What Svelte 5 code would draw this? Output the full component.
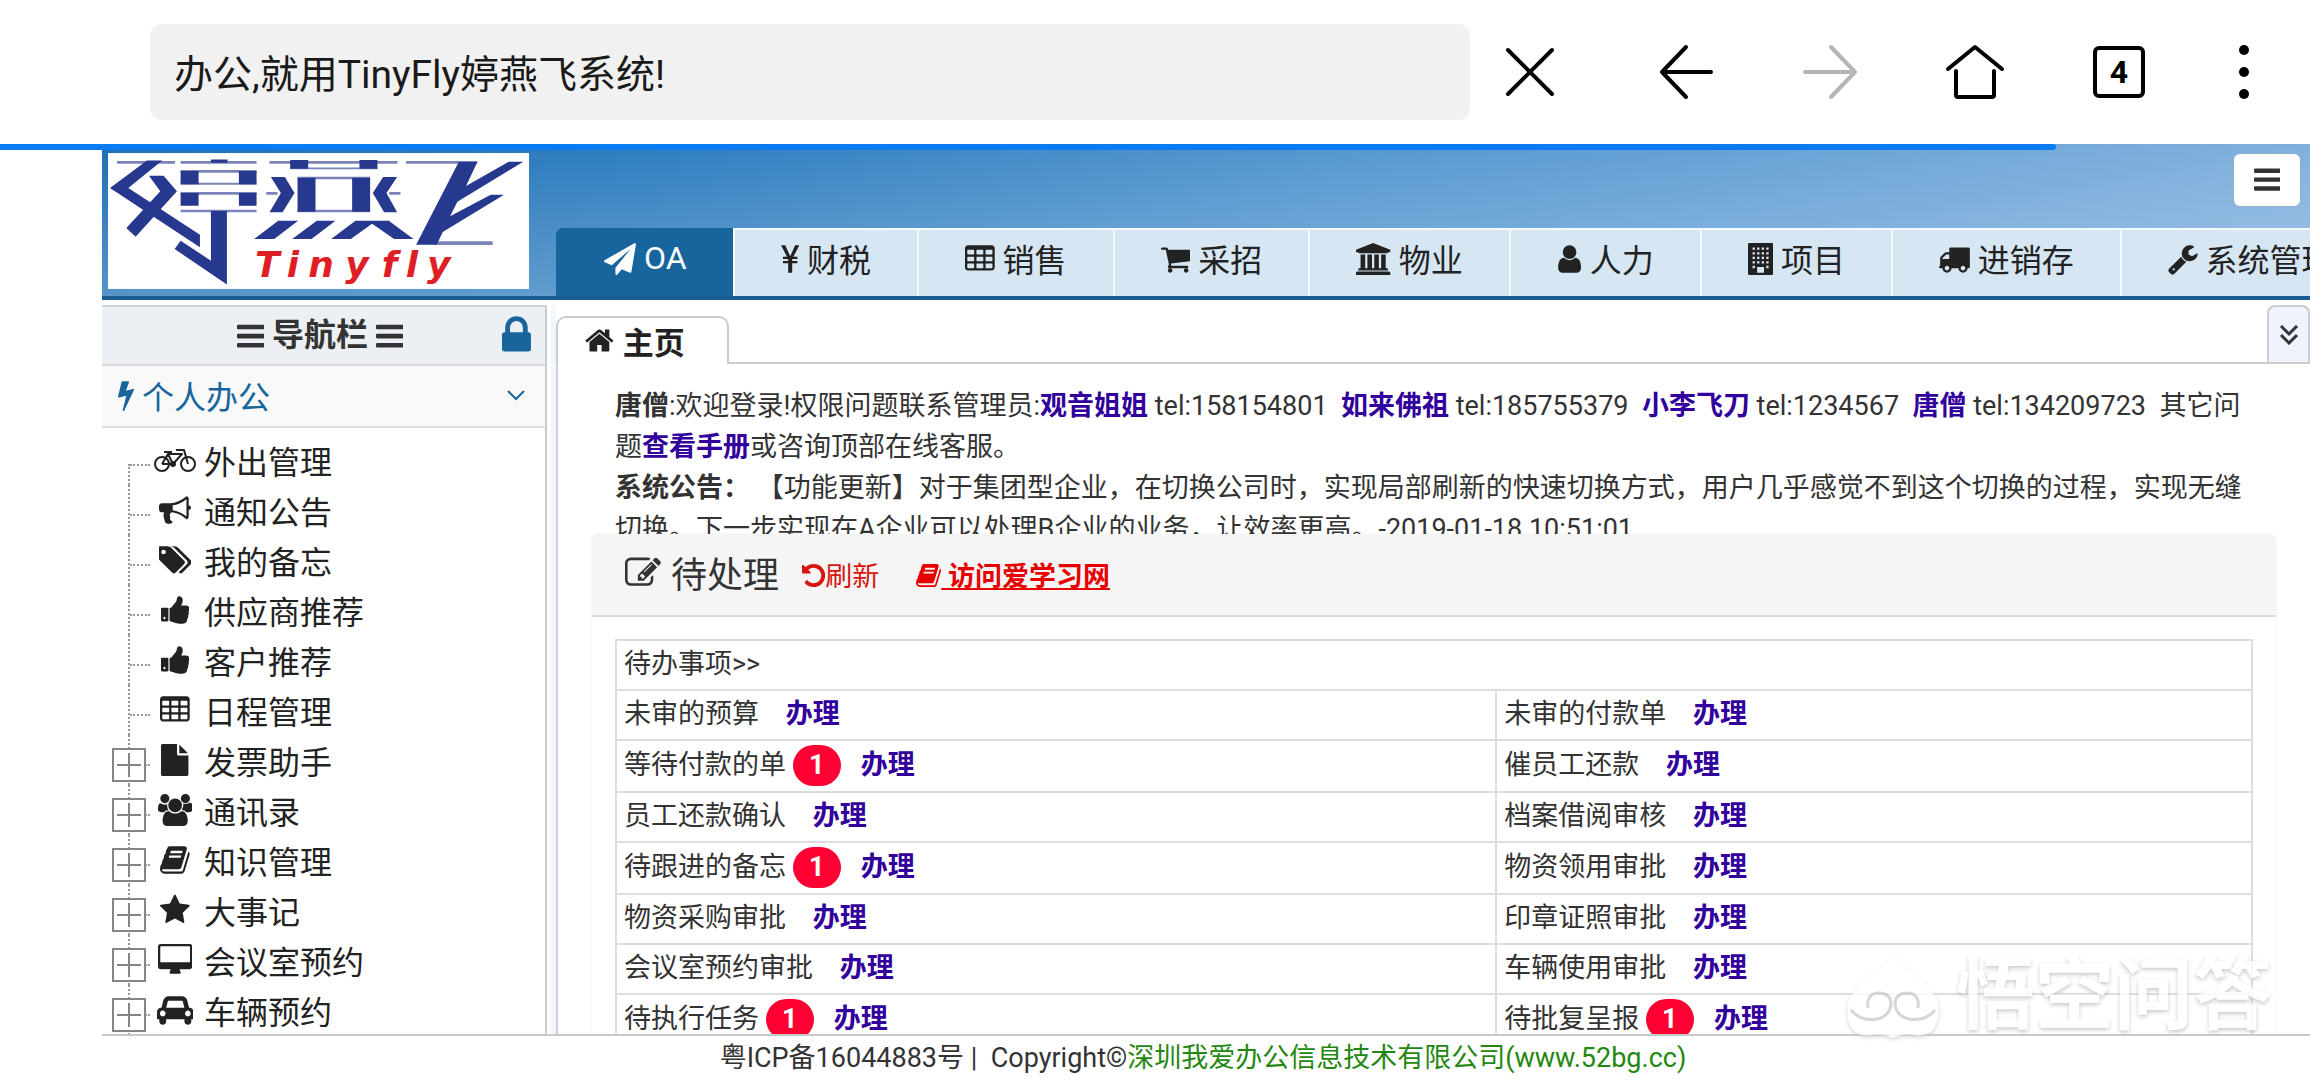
<script>
  const icons = {
    plane: { box: '0 0 1792 1792', d: 'M1764 11q33 24 27 64l-256 1536q-5 29-32 45-14 8-31 8-11 0-24-5l-453-185-242 295q-18 23-49 23-13 0-22-4-19-7-30.5-23.5t-11.5-36.5v-349l864-1059-1069 925-395-162q-37-14-40-55-2-40 32-59l1664-960q15-9 32-9 20 0 36 11z' },
    yen: { box: '0 0 1027 1792', d: 'M0 128h240l275 620 275-620h237l-335 640h225v130h-290v110h290v130h-290v526h-225v-526h-292v-130h292v-110h-292v-130h226z' },
    table: { box: '64 0 1664 1792', d: 'M576 1376v-192q0-14-9-23t-23-9h-320q-14 0-23 9t-9 23v192q0 14 9 23t23 9h320q14 0 23-9t9-23zm0-384v-192q0-14-9-23t-23-9h-320q-14 0-23 9t-9 23v192q0 14 9 23t23 9h320q14 0 23-9t9-23zm512 384v-192q0-14-9-23t-23-9h-320q-14 0-23 9t-9 23v192q0 14 9 23t23 9h320q14 0 23-9t9-23zm-512-768v-192q0-14-9-23t-23-9h-320q-14 0-23 9t-9 23v192q0 14 9 23t23 9h320q14 0 23-9t9-23zm512 384v-192q0-14-9-23t-23-9h-320q-14 0-23 9t-9 23v192q0 14 9 23t23 9h320q14 0 23-9t9-23zm512 384v-192q0-14-9-23t-23-9h-320q-14 0-23 9t-9 23v192q0 14 9 23t23 9h320q14 0 23-9t9-23zm-512-768v-192q0-14-9-23t-23-9h-320q-14 0-23 9t-9 23v192q0 14 9 23t23 9h320q14 0 23-9t9-23zm512 384v-192q0-14-9-23t-23-9h-320q-14 0-23 9t-9 23v192q0 14 9 23t23 9h320q14 0 23-9t9-23zm0-384v-192q0-14-9-23t-23-9h-320q-14 0-23 9t-9 23v192q0 14 9 23t23 9h320q14 0 23-9t9-23zm128-320v1088q0 66-47 113t-113 47h-1344q-66 0-113-47t-47-113v-1088q0-66 47-113t113-47h1344q66 0 113 47t47 113z' },
    cart: { box: '64 0 1664 1792', d: 'M704 1536q0 52-38 90t-90 38-90-38-38-90 38-90 90-38 90 38 38 90zm896 0q0 52-38 90t-90 38-90-38-38-90 38-90 90-38 90 38 38 90zm128-1088v512q0 24-16.5 42.5t-40.5 21.5l-1044 122q13 60 13 70 0 16-24 64h920q26 0 45 19t19 45-19 45-45 19h-1024q-26 0-45-19t-19-45q0-11 8-31.5t16-36 21.5-40 15.5-29.5l-177-823h-204q-26 0-45-19t-19-45 19-45 45-19h256q16 0 28.5 6.5t19.5 15.5 13 24.5 8 26 5.5 29.5 4.5 26h1201q26 0 45 19t19 45z' },
    bank: { box: '0 0 1920 1792', d: 'M960 0l960 384v128h-128q0 26-20.5 45t-48.5 19h-1526q-28 0-48.5-19t-20.5-45h-128v-128zm-704 640h256v768h128v-768h256v768h128v-768h256v768h128v-768h256v768h59q28 0 48.5 19t20.5 45v64h-1664v-64q0-26 20.5-45t48.5-19h59v-768zm1595 960q28 0 48.5 19t20.5 45v128h-1920v-128q0-26 20.5-45t48.5-19h1782z' },
    user: { box: '192 0 1408 1792', d: 'M1536 1399q0 109-62.5 187t-150.5 78h-854q-88 0-150.5-78t-62.5-187q0-85 8.5-160.5t31.5-152 58.5-131 94-89 134.5-34.5q131 128 313 128t313-128q76 0 134.5 34.5t94 89 58.5 131 31.5 152 8.5 160.5zm-256-887q0 159-112.5 271.5t-271.5 112.5-271.5-112.5-112.5-271.5 112.5-271.5 271.5-112.5 271.5 112.5 112.5 271.5z' },
    building: { box: '0 0 1408 1792', d: 'M64 0h1280q64 0 64 64v1664q0 64-64 64h-1280q-64 0-64-64v-1664q0-64 64-64zM256 256v128h128v-128zM512 256v128h128v-128zM768 256v128h128v-128zM1024 256v128h128v-128zM256 512v128h128v-128zM512 512v128h128v-128zM768 512v128h128v-128zM1024 512v128h128v-128zM256 768v128h128v-128zM512 768v128h128v-128zM768 768v128h128v-128zM1024 768v128h128v-128zM256 1024v128h128v-128zM512 1024v128h128v-128zM768 1024v128h128v-128zM1024 1024v128h128v-128zM256 1280v128h128v-128zM1024 1280v128h128v-128zM512 1344v320h384v-320z' },
    truck: { box: '64 0 1728 1792', d: 'M640 1408q0-52-38-90t-90-38-90 38-38 90 38 90 90 38 90-38 38-90zm-384-512h384v-256h-158q-13 0-22 9l-195 195q-9 9-9 22v30zm1280 512q0-52-38-90t-90-38-90 38-38 90 38 90 90 38 90-38 38-90zm256-1088v1024q0 15-4 26.5t-13.5 18.5-16.5 11.5-23.5 6-22.5 2-25.5 0-22.5-.5q0 106-75 181t-181 75-181-75-75-181h-384q0 106-75 181t-181 75-181-75-75-181h-64q-3 0-22.5.5t-25.5 0-22.5-2-23.5-6-16.5-11.5-13.5-18.5-4-26.5q0-26 19-45t45-19v-320q0-8-.5-35t0-38 2.5-34.5 6.5-37 14-30.5 22.5-30l198-198q19-19 50.5-32t58.5-13h160v-192q0-26 19-45t45-19h1024q26 0 45 19t19 45z' },
    wrench: { box: '64 0 1664 1792', d: 'M448 1472q0-26-19-45t-45-19-45 19-19 45 19 45 45 19 45-19 19-45zm644-420l-682 682q-37 37-90 37-52 0-91-37l-106-108q-38-36-38-90 0-53 38-91l681-681q39 98 114.5 173.5t173.5 114.5zm634-435q0 39-23 106-47 134-164.5 217.5t-258.5 83.5q-185 0-316.5-131.5t-131.5-316.5 131.5-316.5 316.5-131.5q58 0 121.5 16.5t107.5 46.5q16 11 16 28t-16 28l-293 169v224l193 107q5-3 79-48.5t135.5-81 70.5-35.5q15 0 23.5 10t8.5 25z' },
    bars: { box: '128 0 1536 1792', d: 'M192 320h1408q64 0 64 64v128q0 64-64 64h-1408q-64 0-64-64v-128q0-64 64-64zM192 832h1408q64 0 64 64v128q0 64-64 64h-1408q-64 0-64-64v-128q0-64 64-64zM192 1344h1408q64 0 64 64v128q0 64-64 64h-1408q-64 0-64-64v-128q0-64 64-64z' },
    lock: { box: '320 0 1152 1792', d: 'M640 768h512v-192q0-106-75-181t-181-75-181 75-75 181v192zm832 96v576q0 40-28 68t-68 28h-960q-40 0-68-28t-28-68v-576q0-40 28-68t68-28h32v-192q0-184 132-316t316-132 316 132 132 316v192h32q40 0 68 28t28 68z' },
    bolt: { box: '448 0 896 1792', d: 'M1333 566q18 20 7 44l-540 1157q-13 25-42 25-4 0-14-2-17-5-25.5-19t-4.5-30l197-808-406 101q-4 1-12 1-18 0-31-11-18-15-13-39l201-825q4-14 16-23t28-9h328q19 0 32 12.5t13 29.5q0 8-5 18l-171 463 396-98q8-2 12-2 19 0 34 15z' },
    bullhorn: { box: '0 0 1792 1792', d: 'M1664 640q53 0 90.5 37.5t37.5 90.5-37.5 90.5-90.5 37.5v384q0 52-38 90t-90 38q-417-347-812-380-58 19-91 66t-31 100.5 40 92.5q-20 33-23 65.5t6 58 33.5 55 48 50 61.5 50.5q-29 58-111.5 83t-168.5 11.5-132-55.5q-7-23-29.5-87.5t-32-94.5-23-89-15-101 3.5-98.5 22-110.5h-122q-66 0-113-47t-47-113v-192q0-66 47-113t113-47h480q435 0 896-384 52 0 90 38t38 90v384zm-128 604v-954q-394 302-768 343v270q377 42 768 341z' },
    tags: { box: '0 0 1835 1792', d: 'M384 448q0-53-37.5-90.5t-90.5-37.5-90.5 37.5-37.5 90.5 37.5 90.5 90.5 37.5 90.5-37.5 37.5-90.5zm1067 576q0 53-37 90l-491 492q-39 37-91 37-53 0-90-37l-715-716q-38-37-64.5-101t-26.5-117v-416q0-52 38-90t90-38h416q53 0 117 26.5t102 64.5l715 714q37 39 37 91zm384 0q0 53-37 90l-491 492q-39 37-91 37-36 0-59-14t-53-45l470-470q37-37 37-90 0-52-37-91l-715-714q-38-38-102-64.5t-117-26.5h224q53 0 117 26.5t102 64.5l715 714q37 39 37 91z' },
    thumb: { box: '64 0 1600 1792', d: 'M320 1344q0-26-19-45t-45-19q-27 0-45.5 19t-18.5 45q0 27 18.5 45.5t45.5 18.5q26 0 45-18.5t19-45.5zm160-512v640q0 26-19 45t-45 19h-288q-26 0-45-19t-19-45v-640q0-26 19-45t45-19h288q26 0 45 19t19 45zm1184 0q0 86-55 149 15 44 15 76 3 76-43 137 17 56 0 117-15 57-54 94 9 112-49 181-64 76-197 78h-129q-66 0-144-15.5t-121.5-29-120.5-39.5q-123-43-158-44-26-1-45-19.5t-19-44.5v-641q0-25 18-43.5t43-20.5q24-2 76-59t101-121q68-87 101-120 18-18 31-48t17.5-48.5 13.5-60.5q7-39 12.5-61t19.5-52 34-50q19-19 45-19 46 0 82.5 10.5t60 26 40 40.5 24 45 12 50 5 45 .5 39q0 38-9.5 76t-19 60-27.5 56q-3 6-10 18t-11 22-8 24h277q78 0 135 57t57 135z' },
    file: { box: '128 0 1536 1792', d: 'M1152 512v-472q22 14 36 28l408 408q14 14 28 36h-472zm-128 32q0 40 28 68t68 28h544v1056q0 40-28 68t-68 28h-1344q-40 0-68-28t-28-68v-1600q0-40 28-68t68-28h800v544z' },
    users: { box: '0 0 1920 1792', d: 'M593 896q-162 5-265 128h-134q-82 0-138-40.5t-56-118.5q0-353 124-353 6 0 43.5 21t97.5 42.5 119 21.5q67 0 133-23-5 37-5 66 0 159 93 293zm1071 637q0 120-73 189.5t-194 69.5h-874q-121 0-194-69.5t-73-189.5q0-53 3.5-103.5t14-109 26.5-108.5 43-97.5 62-81 85.5-53.5 111.5-20q10 0 43 21.5t73 48 107 48 135 21.5 135-21.5 107-48 73-48 43-21.5q61 0 111.5 20t85.5 53.5 62 81 43 97.5 26.5 108.5 14 109 3.5 103.5zm-1024-1277q0 106-75 181t-181 75-181-75-75-181 75-181 181-75 181 75 75 181zm704 384q0 159-112.5 271.5t-271.5 112.5-271.5-112.5-112.5-271.5 112.5-271.5 271.5-112.5 271.5 112.5 112.5 271.5zm576 225q0 78-56 118.5t-138 40.5h-134q-103-123-265-128 93-134 93-293 0-29-5-66 66 23 133 23 59 0 119-21.5t97.5-42.5 43.5-21q124 0 124 353zm-128-609q0 106-75 181t-181 75-181-75-75-181 75-181 181-75 181 75 75 181z' },
    book: { box: '64 0 1664 1792', d: 'M1703 478q40 57 18 129l-275 906q-19 64-76.5 107.5t-122.5 43.5h-923q-77 0-148.5-53.5t-99.5-131.5q-24-67-2-127 0-4 3-27t4-37q1-8-3-21.5t-3-19.5q2-11 8-21t16.5-23.5 16.5-23.5q23-38 45-91.5t30-91.5q3-10 .5-30t-.5-28q3-11 17-28t17-23q21-36 42-92t25-90q1-9-2.5-32t.5-28q4-13 22-30.5t22-22.5q19-26 42.5-84.5t27.5-96.5q1-8-3-25.5t-2-26.5q2-8 9-18t18-23 17-21q8-12 16.5-30.5t15-35 16-36 19.5-32 26.5-23.5 36-11.5 47.5 5.5l-1 3q38-9 51-9h761q74 0 114 56t18 130l-274 906q-36 119-71.5 153.5t-128.5 34.5h-869q-27 0-38 15-11 16-1 43 24 70 144 70h923q29 0 56-15.5t35-41.5l300-987q7-22 5-57 38 15 59 43zm-1064 2q-4 13 2 22.5t20 9.5h608q13 0 25.5-9.5t16.5-22.5l21-64q4-13-2-22.5t-20-9.5h-608q-13 0-25.5 9.5t-16.5 22.5zm-83 256q-4 13 2 22.5t20 9.5h608q13 0 25.5-9.5t16.5-22.5l21-64q4-13-2-22.5t-20-9.5h-608q-13 0-25.5 9.5t-16.5 22.5z' },
    star: { box: '64 0 1664 1792', d: 'M1728 647q0 22-26 48l-363 354 86 500q1 7 1 20 0 21-10.5 35.5t-30.5 14.5q-19 0-40-12l-449-236-449 236q-22 12-40 12-21 0-31.5-14.5t-10.5-35.5q0-6 2-20l86-500-364-354q-25-27-25-48 0-37 56-46l502-73 225-455q19-41 49-41t49 41l225 455 502 73q56 9 56 46z' },
    desktop: { box: '0 0 1920 1792', d: 'M160 0h1600q160 0 160 160v1088q0 160-160 160h-544q0 60 32 130t32 70q0 56-64 56h-512q-64 0-64-56 0-10 32-75t32-125h-544q-160 0-160-160v-1088q0-160 160-160zM160 128q-32 0-32 32v832q0 32 32 32h1600q32 0 32-32v-832q0-32-32-32z' },
    car: { box: '0 0 2048 1792', d: 'M480 1088q0-66-47-113t-113-47-113 47-47 113 47 113 113 47 113-47 47-113zm36-320h1016l-89-357q-2-8-14-17.5t-21-9.5h-768q-9 0-21 9.5t-14 17.5zm1372 320q0-66-47-113t-113-47-113 47-47 113 47 113 113 47 113-47 47-113zm160-96v384q0 14-9 23t-23 9h-96v128q0 80-56 136t-136 56-136-56-56-136v-128h-1024v128q0 80-56 136t-136 56-136-56-56-136v-128h-96q-14 0-23-9t-9-23v-384q0-93 65.5-158.5t158.5-65.5h28l105-419q23-94 104-157.5t179-63.5h768q98 0 179 63.5t104 157.5l105 419h28q93 0 158.5 65.5t65.5 158.5z' },
    home: { box: '64 0 1664 1792', d: 'M1472 992v480q0 26-19 45t-45 19h-384v-384h-256v384h-384q-26 0-45-19t-19-45v-480q0-1 .5-3t.5-3l575-474 575 474q1 2 1 6zm223-69l-62 74q-8 9-21 11h-3q-13 0-21-7l-692-577-692 577q-12 8-24 7-13-2-21-11l-62-74q-8-10-7-23.5t11-21.5l719-599q32-26 76-26t76 26l244 204v-195q0-14 9-23t23-9h192q14 0 23 9t9 23v408l219 182q10 8 11 21.5t-7 23.5z' },
    edit: { box: '0 0 1792 1792', d: 'M888 1184l116-116-152-152-116 116v56h96v96h56zm440-720q-16-16-33 1l-350 350q-17 17-1 33t33-1l350-350q17-17 1-33zm80 594v190q0 119-84.5 203.5t-203.5 84.5h-832q-119 0-203.5-84.5t-84.5-203.5v-832q0-119 84.5-203.5t203.5-84.5h832q63 0 117 25 15 7 18 23 3 17-9 29l-49 49q-14 14-32 8-23-6-45-6h-832q-66 0-113 47t-47 113v832q0 66 47 113t113 47h832q66 0 113-47t47-113v-126q0-13 9-22l64-64q15-15 35-7t20 29zm-96-738l288 288-672 672h-288v-288zm444 132l-92 92-288-288 92-92q28-28 68-28t68 28l152 152q28 28 28 68t-28 68z' },
    undo: { box: '128 0 1536 1792', d: 'M1664 896q0 156-61 298t-164 245-245 164-298 61q-172 0-327-72.5t-264-204.5q-7-10-6.5-22.5t8.5-20.5l137-138q10-9 25-9 16 2 23 12 73 95 179 147t225 52q104 0 198.5-40.5t163.5-109.5 109.5-163.5 40.5-198.5-40.5-198.5-109.5-163.5-163.5-109.5-198.5-40.5q-98 0-188 35.5t-160 101.5l137 138q31 30 14 69-17 40-59 40h-448q-26 0-45-19t-19-45v-448q0-42 40-59 39-17 69 14l130 129q107-101 244.5-156.5t284.5-55.5q156 0 298 61t245 164 164 245 61 298z' }
  };

  const modules = [
    { icon: 'plane', label: 'OA' },
    { icon: 'yen', label: '财税' },
    { icon: 'table', label: '销售' },
    { icon: 'cart', label: '采招' },
    { icon: 'bank', label: '物业' },
    { icon: 'user', label: '人力' },
    { icon: 'building', label: '项目' },
    { icon: 'truck', label: '进销存' },
    { icon: 'wrench', label: '系统管理' }
  ];

  const tree = [
    { icon: 'bicycle', label: '外出管理' },
    { icon: 'bullhorn', label: '通知公告' },
    { icon: 'tags', label: '我的备忘' },
    { icon: 'thumb', label: '供应商推荐' },
    { icon: 'thumb', label: '客户推荐' },
    { icon: 'table', label: '日程管理' },
    { icon: 'file', label: '发票助手', folder: true },
    { icon: 'users', label: '通讯录', folder: true },
    { icon: 'book', label: '知识管理', folder: true },
    { icon: 'star', label: '大事记', folder: true },
    { icon: 'desktop', label: '会议室预约', folder: true },
    { icon: 'car', label: '车辆预约', folder: true }
  ];

  const todos = [
    [{ label: '未审的预算' }, { label: '未审的付款单' }],
    [{ label: '等待付款的单', count: 1 }, { label: '催员工还款' }],
    [{ label: '员工还款确认' }, { label: '档案借阅审核' }],
    [{ label: '待跟进的备忘', count: 1 }, { label: '物资领用审批' }],
    [{ label: '物资采购审批' }, { label: '印章证照审批' }],
    [{ label: '会议室预约审批' }, { label: '车辆使用审批' }],
    [{ label: '待执行任务', count: 1 }, { label: '待批复呈报', count: 1 }]
  ];

  let active = $state('OA');
  let address = $state('办公,就用TinyFly婷燕飞系统!');
  let progress = $state(89);
</script>

{#snippet icon(name)}
  {#if name === 'bicycle'}
    <svg class="icon" viewBox="0 0 42 32" fill="none" stroke="currentColor" stroke-width="2" stroke-linejoin="round" aria-hidden="true">
      <circle cx="8" cy="20" r="7" /><circle cx="34" cy="20" r="7" />
      <path d="M8 20l6-10h14l-9 10H8M14 10l5 10M26 6h4l4 14M22 6h5M10 8h8" />
      <circle cx="19" cy="20" r="2" fill="currentColor" />
    </svg>
  {:else}
    <svg class="icon" viewBox={icons[name].box} fill="currentColor" fill-rule={['building', 'desktop'].includes(name) ? 'evenodd' : 'nonzero'} aria-hidden="true"><path d={icons[name].d} /></svg>
  {/if}
{/snippet}

<div class="screen">
  <div class="browser">
    <input class="address" type="text" aria-label="地址栏" bind:value={address} />
    <button class="tool stop" aria-label="停止">
      <svg viewBox="0 0 60 60"><path d="M8 8l44 44M52 8L8 52" /></svg>
    </button>
    <div class="tools">
      <button class="tool" aria-label="后退"><svg viewBox="0 0 60 60"><path d="M54 30H5M29 5L5 30l24 25" /></svg></button>
      <button class="tool" aria-label="前进" disabled><svg viewBox="0 0 60 60"><path d="M4 30h50M30 5l24 25-24 25" /></svg></button>
      <button class="tool" aria-label="主页"><svg viewBox="0 0 60 60"><path d="M3 27L30 5l27 22M11 29v24q0 2 2 2h34q2 0 2-2V29" /></svg></button>
      <button class="tool" aria-label="标签页"><span class="tab-count">4</span></button>
    </div>
    <button class="tool" aria-label="菜单">
      <svg viewBox="0 0 60 60"><g fill="#000" stroke="none"><circle cx="30" cy="8" r="5" /><circle cx="30" cy="30" r="5" /><circle cx="30" cy="52" r="5" /></g></svg>
    </button>
  </div>

  <div class="page">
    <div class="progress" style="width: {progress}%"></div>
    <header>
      <svg class="logo" viewBox="0 0 1264 408" role="img" aria-label="婷燕飞 Tinyfly">
        <rect width="1264" height="408" fill="#fff" />
        <g transform="translate(-51 -39)">
          <path fill="#7a84b8" d="M78 63h174v8H78zM269 63h228v8H269zM269 90h228v8H269zM269 128h228v6H269zM269 156h228v8H269zM269 209h228v8H269zM536 63h384v8H536zM598 82h262v6H598zM526 156h34v8h-34zM895 156h34v8h-34zM620 110h218v8H620zM620 209h218v8H620zM946 63h214v8H946zM1030 304h176v11h-176z" />
          <g fill="#27388f">
            <path d="M168 61h46L112 144l215 140v38L57 144z" />
            <path d="M174 107h44l40 47-124 136-28-26 102-110z" />
            <path d="M360 58h50v10h-50zM269 93h54v40h-54zM444 93h53v40h-53zM269 159h54v38h-54zM444 159h53v38h-53z" />
            <path d="M360 213h48v221L251 327l18-25 91 60z" />
            <path d="M598 60h54v26h-54zM806 60h54v26h-54zM620 113h54v102h-54zM784 113h54v102h-54z" />
            <path d="M540 111h42l29 48-36 58h-39l34-58zM919 111h-42l-31 48 34 58h39l-32-58z" />
            <path d="M562 242h60l-72 55h-60zM678 242h56l-72 55h-58zM794 242h100l74 55h-58l-66-46-64 46h-59z" />
            <path d="M1104 66h56l-34 72 128-73h44l-198 120-22 44 122-65h40l-184 112-18 38h-62z" />
          </g>
        </g>
        <text class="wordmark" x="441 537 601 712 822 894 958" y="372">Tinyfly</text>
      </svg>
      <div class="header-main">
        <button class="menu" aria-label="展开菜单">{@render icon('bars')}</button>
        <nav class="modules">
          {#each modules as m}
            <a href="#{m.label}" class:active={active === m.label} onclick={() => (active = m.label)}>{@render icon(m.icon)}{m.label}</a>
          {/each}
        </nav>
      </div>
    </header>

    <div class="workspace">
      <aside>
        <div class="nav-title">
          <h2>{@render icon('bars')}导航栏{@render icon('bars')}</h2>
          <button aria-label="锁定">{@render icon('lock')}</button>
        </div>
        <button class="section">
          {@render icon('bolt')}个人办公
          <svg class="chevron" viewBox="0 0 18 12"><path d="M1 2l8 8 8-8" /></svg>
        </button>
        <ul class="tree">
          {#each tree as node}
            <li>
              <span class="branch">
                {#if node.folder}<button class="expand" aria-label="展开{node.label}"></button>{/if}
              </span>
              <span class="node-icon">{@render icon(node.icon)}</span>
              <a href="#{node.label}">{node.label}</a>
            </li>
          {/each}
        </ul>
      </aside>

      <main>
        <div class="page-tabs">
          <a class="page-tab" href="#home">{@render icon('home')}主页</a>
          <button class="more" aria-label="更多">
            <svg viewBox="0 0 20 20"><path d="M2 1l8 8 8-8M2 10l8 8 8-8" /></svg>
          </button>
        </div>
        <div class="content">
          <div class="notice">
            <p><b>唐僧</b>:欢迎登录!权限问题联系管理员:<a href="#gy">观音姐姐</a> tel:158154801 &nbsp;<a href="#rl">如来佛祖</a> tel:185755379 &nbsp;<a href="#lf">小李飞刀</a> tel:1234567 &nbsp;<a href="#ts">唐僧</a> tel:134209723 &nbsp;其它问题<a href="#manual">查看手册</a>或咨询顶部在线客服。</p>
            <p><b>系统公告：</b> 【功能更新】对于集团型企业，在切换公司时，实现局部刷新的快速切换方式，用户几乎感觉不到这个切换的过程，实现无缝切换。下一步实现在A企业可以处理B企业的业务，让效率更高。-2019-01-18 10:51:01</p>
          </div>
          <section class="panel">
            <div class="panel-head">
              <h3>{@render icon('edit')}待处理</h3>
              <button class="refresh">{@render icon('undo')}刷新</button>
              <a class="study" href="#study">{@render icon('book')}<span>&nbsp;访问爱学习网</span></a>
            </div>
            <table>
              <colgroup><col class="wide" /><col /></colgroup>
              <tbody>
                <tr><td colspan="2">待办事项&gt;&gt;</td></tr>
                {#each todos as row}
                  <tr>
                    {#each row as item}
                      <td>
                        {item.label}{#if item.count}&nbsp;<span class="badge">{item.count}</span>{:else}&nbsp;{/if}&nbsp;&nbsp;&nbsp;<a href="#{item.label}">办理</a>
                      </td>
                    {/each}
                  </tr>
                {/each}
              </tbody>
            </table>
          </section>
        </div>
      </main>
    </div>
    <footer>粤ICP备16044883号&nbsp;|&nbsp; Copyright©<a href="#52bg">深圳我爱办公信息技术有限公司(www.52bg.cc)</a></footer>
  </div>

  <div class="watermark">
    <svg viewBox="0 0 94 84" aria-hidden="true">
      <path d="M47 1q8 12 22 20 20 14 24 32l-1 12-4 10q-8 8-20 6-12-2-21 3-9-5-21-3-12 2-20-6l-4-10-1-12q4-18 24-32Q39 13 47 1z" />
      <path class="curl" d="M22 54q-2-14 10-15 13 0 13 11-1 12-14 15-16 3-26-9M72 54q2-14-10-15-13 0-13 11 1 12 14 15 16 3 26-9" />
    </svg>
    <span>悟空问答</span>
  </div>
</div>

<style>
  :global(body) { margin: 0; background: #fff; }

  .screen {
    position: relative;
    display: flex;
    flex-direction: column;
    height: 100vh;
    overflow: hidden;
    font-family: Roboto, "Noto Sans CJK SC", sans-serif;
    font-size: 27px;
    text-spacing-trim: space-all;
    color: #333;
  }

  button { border: 0; padding: 0; background: none; font: inherit; color: inherit; cursor: pointer; }
  a { color: inherit; text-decoration: none; }
  .icon { height: 1em; flex: none; }

  .browser { display: flex; align-items: center; flex: none; height: 144px; padding: 0 36px 0 150px; }
  .address { flex: 1; min-width: 0; height: 96px; box-sizing: border-box; border: 0; border-radius: 12px; padding: 0 24px 2px; background: #f1f1f1; font: inherit; font-size: 39px; color: #1a1a1a; }
  .tool { display: grid; place-items: center; width: 60px; height: 60px; flex: none; }
  .tool svg { width: 60px; height: 60px; fill: none; stroke: #000; stroke-width: 4; stroke-linecap: round; stroke-linejoin: round; }
  .tool:disabled svg { stroke: #b5b5b5; }
  .stop { margin: 0 97px 0 30px; }
  .tools { display: flex; gap: 84px; margin-right: 65px; }
  .tab-count { display: grid; place-items: center; width: 52px; height: 52px; box-sizing: border-box; border: 4px solid #000; border-radius: 6px; font-size: 32px; font-weight: 700; color: #000; }

  .page { position: relative; display: flex; flex-direction: column; flex: 1; min-height: 0; padding-left: 102px; }
  .progress { position: absolute; left: 0; top: 0; height: 6px; border-radius: 0 3px 3px 0; background: #0b7bf2; }

  header {
    display: flex;
    gap: 27px;
    flex: none;
    height: 152px;
    padding-left: 6px;
    border-bottom: 4px solid #1b5f92;
    background: linear-gradient(to bottom, rgba(255, 255, 255, 0), rgba(255, 255, 255, 0.25)), linear-gradient(100deg, #1f6fb5 0%, #2f7ec0 25%, #5497d0 55%, #82b1de 100%);
  }
  .logo { width: 421px; height: 136px; flex: none; margin-top: 9px; }
  .wordmark { font: italic 700 108px "DejaVu Sans", sans-serif; fill: #de1f26; }
  .header-main { display: flex; flex-direction: column; flex: 1; min-width: 0; justify-content: space-between; }
  .menu { align-self: flex-end; display: grid; place-items: center; width: 66px; height: 52px; margin: 10px 10px 0 0; padding-bottom: 4px; border-radius: 6px; background: #fff; box-shadow: 0 0 2px #aaa; font-size: 31px; color: #333; }
  .modules { display: flex; overflow: hidden; border-radius: 8px 0 0 0; }
  .modules a { display: flex; align-items: center; justify-content: center; flex: none; gap: 8px; height: 56px; padding: 0 46px 10px; border-top: 2px solid #f4f9fd; border-left: 2px solid #f4f9fd; background: #d7e6f3; font-size: 32px; color: #222; }
  .modules a.active { border-color: #17659c; background: #17659c; color: #fff; }
  .modules .icon { margin-top: 2px; }

  .workspace { display: flex; flex: 1; min-height: 0; gap: 4px; padding-top: 5px; background: #fff; border-bottom: 2px solid #c9c9c9; }
  aside { width: 445px; flex: none; box-sizing: border-box; overflow: hidden; border-top: 2px solid #cdd2d6; border-right: 2px solid #ccc; }
  .nav-title { display: flex; align-items: center; height: 57px; padding: 0 14px 0 36px; border-bottom: 2px solid #d9d9d9; background: #ecf0f4; }
  .nav-title h2 { display: flex; flex: 1; align-items: center; justify-content: center; gap: 8px; margin: 0; padding-bottom: 2px; font-size: 32px; line-height: 54px; }
  .nav-title button { display: grid; font-size: 45px; color: #17659c; }
  .section { display: flex; align-items: center; gap: 8px; width: 100%; height: 62px; padding: 0 20px 2px 16px; border-bottom: 2px solid #ddd; background: #f9f9f9; font-size: 32px; color: #17659c; }
  .chevron { width: 18px; height: 12px; margin-left: auto; fill: none; stroke: currentColor; stroke-width: 2; }

  .tree { margin: 0; padding: 7px 0 0; list-style: none; font-size: 32px; color: #222; }
  .tree li { display: flex; align-items: center; height: 50px; }
  .branch { position: relative; width: 53px; height: 50px; flex: none; }
  .branch::before { content: ""; position: absolute; left: 26px; top: 0; bottom: 0; border-left: 2px dotted #999; }
  .branch::after { content: ""; position: absolute; left: 28px; top: 29px; width: 20px; border-top: 2px dotted #999; }
  li:first-child .branch::before { top: 29px; }
  .expand {
    position: absolute;
    z-index: 1;
    left: 10px;
    top: 13px;
    width: 34px;
    height: 34px;
    border: 2px solid #858585;
    background: linear-gradient(#858585, #858585) center / 24px 2px no-repeat, linear-gradient(#858585, #858585) center / 2px 24px no-repeat, #fff;
  }
  .node-icon { display: grid; place-items: center; width: 40px; margin-right: 9px; }

  main { display: flex; flex-direction: column; flex: 1; min-width: 0; border-left: 5px solid #f0f6fc; }
  .page-tabs { display: flex; align-items: flex-end; justify-content: space-between; flex: none; height: 57px; border-bottom: 2px solid #ccc; }
  .page-tab { display: flex; align-items: center; gap: 9px; height: 44px; padding: 0 42px 2px 27px; margin-bottom: -2px; border: 2px solid #ccc; border-bottom: 0; border-radius: 10px 10px 0 0; background: #fff; font-size: 31px; font-weight: 700; color: #222; }
  .more { display: grid; place-items: center; width: 43px; height: 57px; box-sizing: border-box; border: 2px solid #c8ccd4; border-bottom: 0; border-radius: 8px 8px 0 0; background: #eff4fc; }
  .more svg { width: 20px; height: 20px; fill: none; stroke: #333; stroke-width: 3; }

  .content { flex: 1; min-height: 0; overflow: hidden; padding: 22px 34px 0; border-left: 2px solid #ccd2d8; }
  .notice { height: 148px; overflow: hidden; padding: 0 24px 0 23px; line-height: 41px; }
  .notice p { margin: 0; }
  .notice a, td a { font-weight: 700; color: #32009c; }

  .panel { border-radius: 6px; box-shadow: 0 0 2px #e5e5e5; }
  .panel-head { display: flex; align-items: center; height: 76px; padding: 0 33px 5px; border-bottom: 2px solid #ddd; border-radius: 6px 6px 0 0; background: #f5f5f5; }
  .panel-head .icon { margin-top: 2px; }
  .panel-head h3 { display: flex; align-items: center; gap: 10px; margin: 0; font-size: 36px; font-weight: 400; }
  .refresh { display: flex; align-items: center; margin-left: 23px; padding-top: 4px; color: #d8140f; }
  .study { display: flex; align-items: center; margin-left: 37px; padding-top: 4px; font-weight: 700; color: #e80000; }
  .study span { text-decoration: underline; }

  table { width: calc(100% - 46px); margin: 22px 23px 0; border-collapse: collapse; table-layout: fixed; }
  .wide { width: 53.8%; }
  td { height: 46px; padding: 0 8px 2px 7px; border: 2px solid #ddd; line-height: 41px; white-space: nowrap; }
  .badge { display: inline-block; width: 48px; height: 41px; margin: 4px 0 3px; border-radius: 21px; background: #f03; text-align: center; font-weight: 700; color: #fff; }

  footer { flex: none; height: 44px; padding-right: 6px; line-height: 44px; text-align: center; }
  footer a { color: #24870f; }

  .watermark { position: absolute; right: 38px; bottom: 36px; display: flex; align-items: center; gap: 16px; opacity: 0.8; font-size: 79px; line-height: 96px; font-weight: 700; color: #fff; text-shadow: 0 2px 4px #bbb; }
  .watermark svg { width: 94px; height: 84px; fill: #fff; filter: drop-shadow(0 2px 2px #ccc); }
  .watermark .curl { fill: none; stroke: #ccc; stroke-width: 3; }
</style>
